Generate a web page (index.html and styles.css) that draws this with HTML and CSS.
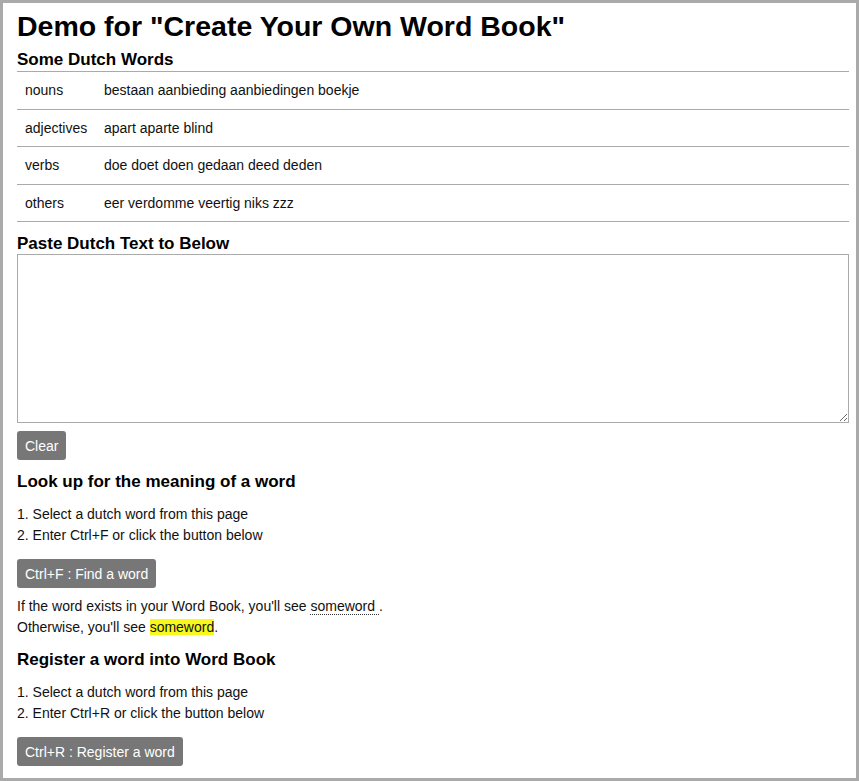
FILE: index.html
```html
<!DOCTYPE html>
<html>
<head>
<meta charset="utf-8">
<link rel="stylesheet" href="styles.css">
</head>
<body>
<div class="page">
  <h1 class="title">Demo for "Create Your Own Word Book"</h1>
  <h3 class="sub">Some Dutch Words</h3>
  <table class="words">
    <colgroup><col class="c-kind"><col class="c-list"></colgroup>
    <tr><td>nouns</td><td>bestaan aanbieding aanbiedingen boekje</td></tr>
    <tr><td>adjectives</td><td>apart aparte blind</td></tr>
    <tr><td>verbs</td><td>doe doet doen gedaan deed deden</td></tr>
    <tr><td>others</td><td>eer verdomme veertig niks zzz</td></tr>
  </table>
  <h3 class="sub paste">Paste Dutch Text to Below</h3>
  <textarea class="input"></textarea>
  <div class="row"><button class="btn">Clear</button></div>
  <h3 class="sec">Look up for the meaning of a word</h3>
  <ol class="steps">
    <li>Select a dutch word from this page</li>
    <li>Enter Ctrl+F or click the button below</li>
  </ol>
  <div class="row after-list"><button class="btn">Ctrl+F : Find a word</button></div>
  <p class="note">If the word exists in your Word Book, you'll see <span class="known">someword </span>.<br>Otherwise, you'll see <span class="hl">someword</span>.</p>
  <h3 class="sec">Register a word into Word Book</h3>
  <ol class="steps">
    <li>Select a dutch word from this page</li>
    <li>Enter Ctrl+R or click the button below</li>
  </ol>
  <div class="row after-list"><button class="btn">Ctrl+R : Register a word</button></div>
</div>
</body>
</html>
```
FILE: styles.css
```css
html, body { margin: 0; padding: 0; background: #fff; }
body { font-family: "Liberation Sans", Arial, sans-serif; color: #111; font-size: 14px; }
.page {
  box-sizing: border-box;
  width: 859px;
  height: 781px;
  border: 3px solid #aaa;
  padding: 6px 7px 0 14px;
  overflow: hidden;
}
.title { font-size: 28.5px; font-weight: bold; margin: 0; line-height: 34px; color: #000; }
.sub { font-size: 17px; font-weight: bold; margin: 7px 0 1px; line-height: 20px; color: #000; }
.paste { margin-top: 12px; margin-bottom: 0; }
.words { width: 100%; border-collapse: collapse; border-top: 1px solid #aaa; table-layout: fixed; }
.words .c-kind { width: 79px; }
.words td { border-bottom: 1px solid #aaa; padding: 0 8px; height: 36.5px; line-height: 18px; white-space: nowrap; }
.input {
  display: block; box-sizing: border-box; width: 100%; height: 169px;
  border: 1px solid #aaa; margin: 0; resize: vertical;
}
.row { margin-top: 8px; }
.row.after-list { margin-top: 13px; }
.btn {
  background: #777; color: #fff; border: none; border-radius: 3px;
  font-family: inherit; font-size: 14px; height: 29px; padding: 0 8px; margin: 0;
}
.sec { font-size: 17px; font-weight: bold; margin: 12px 0 0; line-height: 20px; color: #000; }
.steps { margin: 12px 0 0; padding: 0; list-style-position: inside; line-height: 21px; }
.note { margin: 8px 0 0; line-height: 21px; }
.known { border-bottom: 1px dotted #333; }
.hl { background: #f8f81e; }
```
